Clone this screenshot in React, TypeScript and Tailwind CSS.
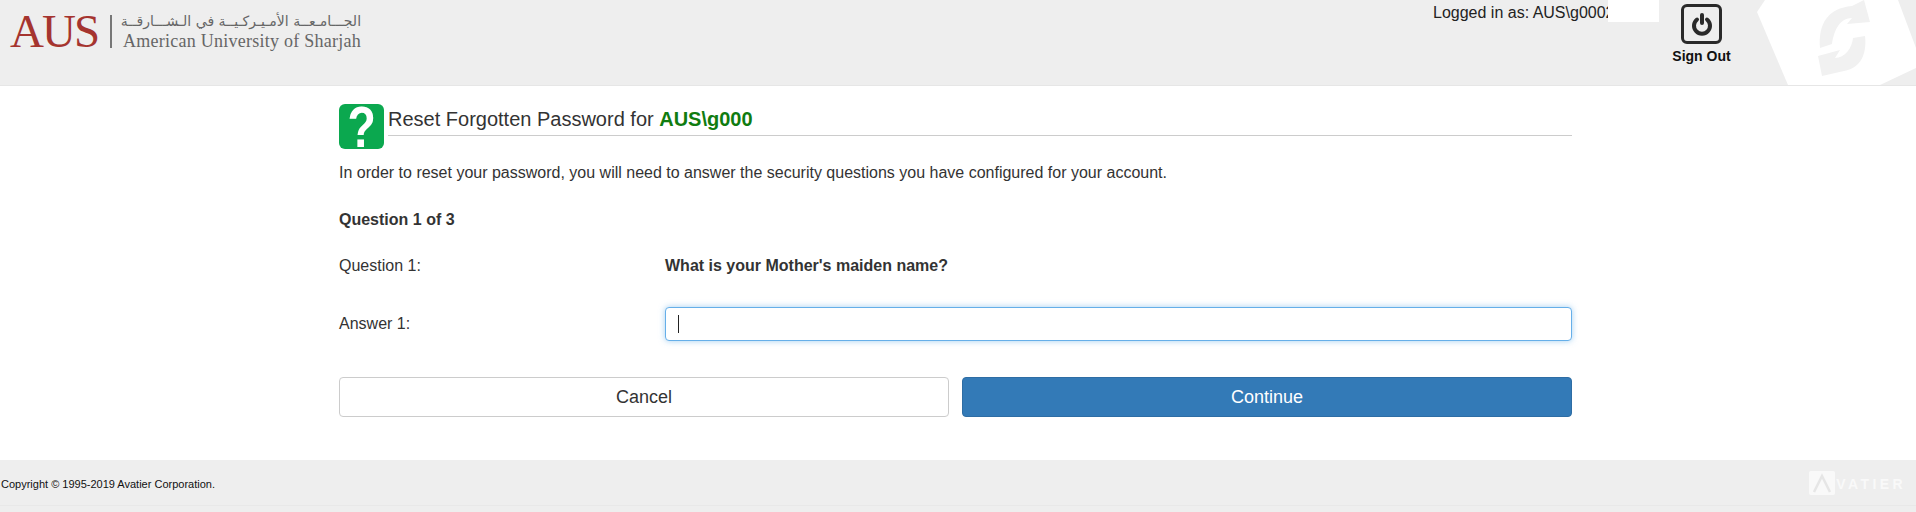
const sans = "font-['Liberation_Sans',Arial,sans-serif]";

function Watermark() {
  return (
    <svg className="absolute right-0 top-0" width="176" height="85" viewBox="0 0 176 85">
      <polygon points="25,0 158,0 176,48 176,68 140,85 48,85 17,12" fill="#ffffff" />
      <path d="M80 48 C78 24 88 8 112 6 L124 0 L130 22 L107 24 L112 18 C100 18 94 30 92 44 Z" fill="#f1f1f1" />
      <path d="M125 36 C127 52 122 68 104 71 L82 76 L78 56 L100 50 L95 58 C105 58 112 48 113 38 Z" fill="#f1f1f1" />
    </svg>
  );
}

function PowerIcon() {
  return (
    <div className="w-[41px] h-[40px] rounded-[6px] border-[3px] border-[#2a2a2a] flex items-center justify-center">
      <svg width="22" height="24" viewBox="0 0 22 24" fill="none" stroke="#2a2a2a" strokeWidth="4" strokeLinecap="round">
        <path d="M6 7.5 A8 8 0 1 0 16 7.5" />
        <path d="M11 3 V11" />
      </svg>
    </div>
  );
}

export default function App() {
  return (
    <div className={`${sans} w-[1916px] h-[512px] overflow-hidden bg-white text-[#333] flex flex-col`}>
      <header className="relative h-[86px] shrink-0 bg-[#eeeeee] border-b border-[#e6e6e6] flex">
        <Watermark />
        <div className="ml-[10px] mt-[6px] flex items-center h-[50px]">
          <span className="font-['Liberation_Serif',serif] text-[47px] leading-none text-[#a5342f] tracking-[-2px]">AUS</span>
          <div className="ml-[12px] w-[2px] h-[33px] bg-[#777]" />
          <div className="ml-[11px] flex flex-col text-[#666] w-[238px]">
            <span dir="rtl" className="text-[14px] leading-[20px] whitespace-nowrap font-['DejaVu_Sans',sans-serif] text-right">الجـــامـعــة الأمـيـركـيــة في الـشـــارقــة</span>
            <span className="font-['Liberation_Serif',serif] text-[18px] leading-[20px] tracking-[0.25px] whitespace-nowrap">American University of Sharjah</span>
          </div>
        </div>
        <div className="relative ml-auto mr-[186px] flex">
          <div className="relative w-[226px] mt-[4px] h-[18px] text-[16px] leading-[18px] text-[#222] whitespace-nowrap">
            Logged in as: AUS\g0002
            <span className="absolute left-[175px] top-[-4px] w-[51px] h-[22px] bg-white" />
          </div>
          <div className="ml-[14px] mt-[4px] w-[57px] flex flex-col items-center">
            <PowerIcon />
            <span className="mt-[4px] text-[14px] leading-[16px] font-bold text-[#111] whitespace-nowrap">Sign Out</span>
          </div>
        </div>
      </header>
      <main className="flex-1 mx-[339px] w-[1233px]">
        <div className="mt-[18px] flex h-[45px]">
          <div className="w-[45px] h-[45px] rounded-[6px] bg-[#0ba84f] flex items-center justify-center text-white font-bold text-[58px] leading-[45px]"><span className="scale-x-[0.8]">?</span></div>
          <div className="ml-[4px] flex-1 h-[32px] border-b border-[#ccc] text-[20px] leading-[30px] whitespace-nowrap">
            Reset Forgotten Password for <b className="text-[#107c10]">AUS\g000</b>
          </div>
        </div>
        <p className="mt-[14px] text-[16px] leading-[20px]">In order to reset your password, you will need to answer the security questions you have configured for your account.</p>
        <p className="mt-[27px] text-[16px] leading-[20px] font-bold">Question 1 of 3</p>
        <div className="mt-[26px] flex text-[16px] leading-[20px]">
          <span className="w-[326px]">Question 1:</span>
          <b>What is your Mother's maiden name?</b>
        </div>
        <div className="mt-[31px] flex items-center text-[16px]">
          <span className="w-[326px]">Answer 1:</span>
          <div className="flex-1 h-[34px] rounded-[4px] border border-[#66afe9] bg-white shadow-[0_0_6px_rgba(102,175,233,0.6)] flex items-center pl-[12px]">
            <span className="w-[1px] h-[18px] bg-[#222]" />
          </div>
        </div>
        <div className="mt-[36px] flex gap-[13px] text-[18px]">
          <button className="flex-1 h-[40px] rounded-[4px] border border-[#ccc] bg-white text-[#333]">Cancel</button>
          <button className="flex-1 h-[40px] rounded-[4px] border border-[#2e6da4] bg-[#337ab7] text-white">Continue</button>
        </div>
      </main>
      <footer className="h-[52px] shrink-0 bg-[#eeeeee] flex flex-col">
        <div className="h-[46px] flex items-center justify-between border-b border-[#e8e8e8]">
          <span className="ml-[1px] mt-[3px] text-[11px] text-[#111]">Copyright © 1995-2019 Avatier Corporation.</span>
          <div className="mr-[10px] flex items-center">
            <div className="w-[26px] h-[24px] rounded-[2px] bg-[#f9f9f9] flex items-center justify-center">
              <svg width="20" height="20" viewBox="0 0 20 20" fill="none" stroke="#e6e6e6" strokeWidth="2.5"><path d="M2 19 L10 3 L18 19" /></svg>
            </div>
            <span className="mt-[3px] ml-[1px] text-[14px] leading-none font-bold tracking-[3.4px] text-[#f9f9f9]">VATIER</span>
          </div>
        </div>
      </footer>
    </div>
  );
}
